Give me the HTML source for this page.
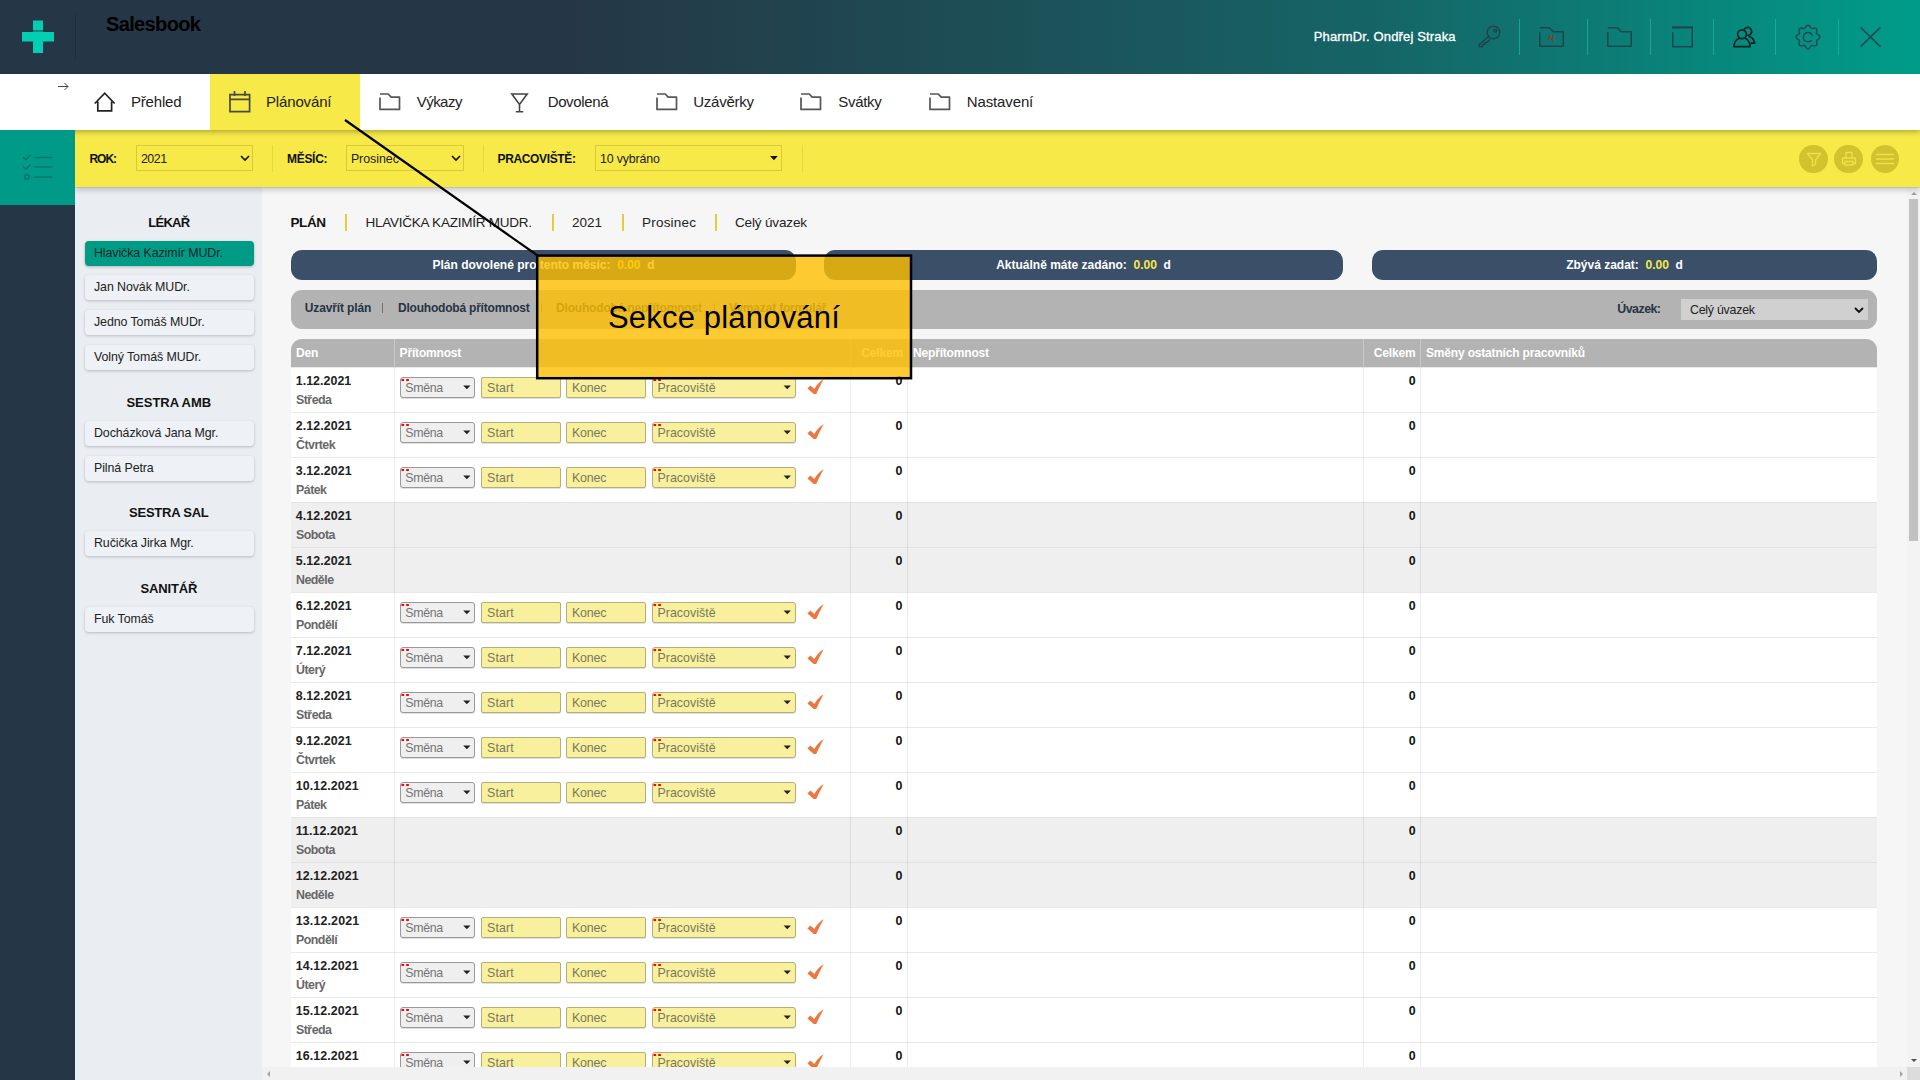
<!DOCTYPE html>
<html lang="cs"><head><meta charset="utf-8"><title>Salesbook</title>
<style>
*{box-sizing:border-box;margin:0;padding:0}
html,body{width:1920px;height:1080px;overflow:hidden;background:#f6f6f6;font-family:"Liberation Sans",sans-serif;color:#222}
body{position:relative}
.a{position:absolute}
.t{position:absolute;white-space:pre;line-height:1}
svg{position:absolute;overflow:visible}
#hdr{left:0;top:0;width:1920px;height:74px;background:linear-gradient(90deg,#253746 0%,#253746 30%,#156566 72%,#009c8a 100%)}
#nav{left:0;top:74px;width:1920px;height:56px;background:#fff;box-shadow:0 2px 5px rgba(0,0,0,.28)}
#tab{left:210px;top:0;width:150px;height:56px;background:#f7e948}
#tool{left:75px;top:130px;width:1845px;height:57px;background:#f7e948;box-shadow:0 1px 0 rgba(110,110,190,.15),0 3px 6px rgba(0,0,0,.2)}
#dark{left:0;top:205px;width:75px;height:875px;background:#253746}
#teal{left:0;top:130px;width:75px;height:75px;background:#009b88}
#side{left:75px;top:187px;width:187px;height:893px;background:#eaeef3}
.sel{position:absolute;border:1px solid #d9c93a;height:26px;top:15px}
.sep{position:absolute;width:1px;background:#e6d83f;top:15px;height:27px}
.h{font-weight:bold;font-size:13px;color:#111}
.it{position:absolute;left:10px;width:169px;height:25px;border-radius:4px;background:#eef1f5;box-shadow:0 1px 3px rgba(0,0,0,.22)}
.it.on{background:#009b84;box-shadow:0 1px 3px rgba(0,0,0,.25)}
.pill{position:absolute;top:250px;height:30px;border-radius:11px;background:#3b5068}
.bar{position:absolute;left:291px;width:1586px;background:#b3b3b3}
.row{position:absolute;left:291px;width:1586px;height:45px;background:#fff;border-top:1px solid #e9e9e9}
.row.we{background:#efefef;border-top-color:#e2e2e2}
.vl{position:absolute;top:367px;width:1px;height:700px;background:rgba(0,0,0,.075)}
.vh{position:absolute;top:339px;width:1px;height:28px;background:rgba(255,255,255,.28)}
.s1{position:absolute;left:109px;top:9px;width:75px;height:21px;border:1px solid #999;border-radius:3px;background:#efefef;box-shadow:0 1px 0 rgba(0,0,0,.12)}
.i1{position:absolute;top:9px;height:21px;border:1px solid #b5ae7c;border-radius:2px;background:#f8f09c;box-shadow:0 1px 0 rgba(0,0,0,.12)}
.rd{position:absolute;top:1px;width:2.6px;height:2px;background:#f00}
.ar{position:absolute;width:0;height:0;border-left:3.7px solid transparent;border-right:3.7px solid transparent;border-top:3.9px solid #222}
</style></head>
<body>
<div class="a" id="side">
<span class="t sh" style="left:-306.20px;width:800px;text-align:center;top:29.20px;font-size:13px;color:#111;font-weight:bold;letter-spacing:-0.772px;">LÉKAŘ</span>
<div class="it on" style="top:54px">
<span class="t si" style="left:9.00px;top:5.50px;font-size:12.4px;color:#15262d;letter-spacing:-0.086px;">Hlavička Kazimír MUDr.</span>
</div>
<div class="it" style="top:88px">
<span class="t si" style="left:9.00px;top:5.50px;font-size:12.4px;color:#222;letter-spacing:-0.086px;">Jan Novák MUDr.</span>
</div>
<div class="it" style="top:123px">
<span class="t si" style="left:9.00px;top:5.50px;font-size:12.4px;color:#222;letter-spacing:-0.086px;">Jedno Tomáš MUDr.</span>
</div>
<div class="it" style="top:158px">
<span class="t si" style="left:9.00px;top:5.50px;font-size:12.4px;color:#222;letter-spacing:-0.086px;">Volný Tomáš MUDr.</span>
</div>
<span class="t sh" style="left:-306.20px;width:800px;text-align:center;top:209.00px;font-size:13px;color:#111;font-weight:bold;letter-spacing:-0.032px;">SESTRA AMB</span>
<div class="it" style="top:234px">
<span class="t si" style="left:9.00px;top:5.50px;font-size:12.4px;color:#222;letter-spacing:-0.086px;">Docházková Jana Mgr.</span>
</div>
<div class="it" style="top:269px">
<span class="t si" style="left:9.00px;top:5.50px;font-size:12.4px;color:#222;letter-spacing:-0.086px;">Pilná Petra</span>
</div>
<span class="t sh" style="left:-306.20px;width:800px;text-align:center;top:319.20px;font-size:13px;color:#111;font-weight:bold;letter-spacing:-0.241px;">SESTRA SAL</span>
<div class="it" style="top:344px">
<span class="t si" style="left:9.00px;top:5.50px;font-size:12.4px;color:#222;letter-spacing:-0.086px;">Ručička Jirka Mgr.</span>
</div>
<span class="t sh" style="left:-306.20px;width:800px;text-align:center;top:395.00px;font-size:13px;color:#111;font-weight:bold;letter-spacing:-0.148px;">SANITÁŘ</span>
<div class="it" style="top:420px">
<span class="t si" style="left:9.00px;top:5.50px;font-size:12.4px;color:#222;letter-spacing:-0.086px;">Fuk Tomáš</span>
</div>
</div>
<div class="a" id="main" style="left:0;top:0;width:1920px;height:1080px">
<span class="t tb" style="left:290.50px;top:215.57px;font-size:13.5px;color:#111;font-weight:bold;letter-spacing:-0.421px;">PLÁN</span>
<span class="t tu" style="left:365.50px;top:215.57px;font-size:13.5px;color:#222;letter-spacing:-0.240px;">HLAVIČKA KAZIMÍR MUDR.</span>
<span class="t tt" style="left:572.00px;top:215.57px;font-size:13.5px;color:#222;letter-spacing:-0.005px;">2021</span>
<span class="t tt" style="left:642.00px;top:215.57px;font-size:13.5px;color:#222;letter-spacing:0.209px;">Prosinec</span>
<span class="t tt" style="left:735.00px;top:215.57px;font-size:13.5px;color:#222;letter-spacing:-0.154px;">Celý úvazek</span>
<div class="a" style="left:345px;top:214px;width:2px;height:17px;background:#dfcf38"></div>
<div class="a" style="left:552px;top:214px;width:2px;height:17px;background:#dfcf38"></div>
<div class="a" style="left:622px;top:214px;width:2px;height:17px;background:#dfcf38"></div>
<div class="a" style="left:715px;top:214px;width:2px;height:17px;background:#dfcf38"></div>
<div class="pill" style="left:291px;width:505px">
<span class="t p1" style="left:0;width:505px;text-align:center;top:8.84px;font-size:12px;font-weight:bold;color:#fff;letter-spacing:0.000px">Plán dovolené pro tento měsíc:  <span style="color:#f7e948">0.00</span>  d</span>
</div>
<div class="pill" style="left:824px;width:519px">
<span class="t p1" style="left:0;width:519px;text-align:center;top:8.84px;font-size:12px;font-weight:bold;color:#fff;letter-spacing:0.000px">Aktuálně máte zadáno:  <span style="color:#f7e948">0.00</span>  d</span>
</div>
<div class="pill" style="left:1372px;width:505px">
<span class="t p1" style="left:0;width:505px;text-align:center;top:8.84px;font-size:12px;font-weight:bold;color:#fff;letter-spacing:0.000px">Zbývá zadat:  <span style="color:#f7e948">0.00</span>  d</span>
</div>
<div class="bar" style="top:290px;height:39px;border-radius:11px">
<span class="t ab" style="left:13.80px;top:11.84px;font-size:12px;color:#263445;font-weight:bold;letter-spacing:-0.129px;">Uzavřít plán</span>
<span class="t ab" style="left:107.00px;top:11.84px;font-size:12px;color:#263445;font-weight:bold;letter-spacing:-0.209px;">Dlouhodobá přítomnost</span>
<span class="t ab" style="left:265.00px;top:11.84px;font-size:12px;color:#263445;font-weight:bold;letter-spacing:-0.181px;">Dlouhodobá nepřítomnost</span>
<span class="t ab" style="left:438.00px;top:11.84px;font-size:12px;color:#263445;font-weight:bold;letter-spacing:-0.181px;">Vymazat formulář</span>
<div class="a" style="left:91px;top:12.5px;width:1px;height:10px;background:#707070"></div>
<div class="a" style="left:250px;top:12.5px;width:1px;height:10px;background:#707070"></div>
<div class="a" style="left:423px;top:12.5px;width:1px;height:10px;background:#707070"></div>
<span class="t ab2" style="left:1326.30px;top:12.50px;font-size:12.4px;color:#263445;font-weight:bold;letter-spacing:-0.524px;">Úvazek:</span>
<div class="a" style="left:1390px;top:9px;width:187px;height:21px;background:#d0d0d0">
<span class="t uv" style="left:9.00px;top:5.00px;font-size:12.4px;color:#222;letter-spacing:-0.250px;">Celý úvazek</span>
<svg width="10" height="6" style="left:173px;top:8px" viewBox="0 0 10 6" fill="none" stroke="#111" stroke-width="1.8"><path d="M1 1l4 4 4-4"/></svg>
</div></div>
<div class="bar" style="top:339px;height:28px;border-radius:11px 11px 0 0">
<span class="t th" style="left:5.00px;top:7.84px;font-size:12px;color:#fff;font-weight:bold;letter-spacing:-0.176px;">Den</span>
<span class="t th" style="left:108.60px;top:7.84px;font-size:12px;color:#fff;font-weight:bold;letter-spacing:-0.176px;">Přítomnost</span>
<span class="t th" style="right:974.00px;top:7.84px;font-size:12px;color:#fff;font-weight:bold;letter-spacing:-0.176px;">Celkem</span>
<span class="t th" style="left:622.00px;top:7.84px;font-size:12px;color:#fff;font-weight:bold;letter-spacing:-0.176px;">Nepřítomnost</span>
<span class="t th" style="right:461.50px;top:7.84px;font-size:12px;color:#fff;font-weight:bold;letter-spacing:-0.176px;">Celkem</span>
<span class="t th" style="left:1135.00px;top:7.84px;font-size:12px;color:#fff;font-weight:bold;letter-spacing:-0.176px;">Směny ostatních pracovníků</span>
</div>
<div class="row" style="top:367px">
<span class="t dt" style="left:4.80px;top:6.50px;font-size:12.4px;color:#222;font-weight:bold;letter-spacing:0.034px;">1.12.2021</span>
<span class="t dd" style="left:5.00px;top:25.50px;font-size:12.4px;color:#686868;font-weight:bold;letter-spacing:-0.513px;">Středa</span>
<span class="t zz" style="right:974.60px;top:6.50px;font-size:12.4px;color:#111;font-weight:bold;">0</span>
<span class="t zz" style="right:461.40px;top:6.50px;font-size:12.4px;color:#111;font-weight:bold;">0</span>
<div class="s1"><svg width="73" height="19" style="left:0;top:0"><path d="M.5 1.1h2.6V3H.5zM5.2 1.1h2.7V3H5.2z" fill="#f00"/><path d="M62.2 7.4h7.3l-3.65 3.9z" fill="#222"/></svg>
<span class="t fc" style="left:4.20px;top:3.50px;font-size:12.4px;color:#757575;letter-spacing:-0.315px;">Směna</span>
</div>
<div class="i1" style="left:190px;width:80px">
<span class="t fc" style="left:5.00px;top:3.50px;font-size:12.4px;color:#7a7960;letter-spacing:0.130px;">Start</span>
</div>
<div class="i1" style="left:275px;width:80px">
<span class="t fc" style="left:5.00px;top:3.50px;font-size:12.4px;color:#7a7960;letter-spacing:-0.185px;">Konec</span>
</div>
<div class="i1" style="left:361px;width:144px;border-radius:3px"><svg width="142" height="19" style="left:0;top:0"><path d="M.5 1.1h2.6V3H.5zM5.2 1.1h2.7V3H5.2z" fill="#f00"/><path d="M130.6 7.4h7.3l-3.65 3.9z" fill="#222"/></svg>
<span class="t fc" style="left:4.50px;top:3.50px;font-size:12.4px;color:#7a7960;letter-spacing:0.027px;">Pracoviště</span>
</div>
<svg width="17" height="16" style="left:515.6px;top:11px" viewBox="0 0 16 15"><path d="M.4 8.9 3.1 6.2 6.9 9.4C9 5.6 12 2.2 15.8.2 13.3 4.2 11 8.8 8.7 14.2H6.3z" fill="#ea7941"/></svg>
</div>
<div class="row" style="top:412px">
<span class="t dt" style="left:4.80px;top:6.50px;font-size:12.4px;color:#222;font-weight:bold;letter-spacing:0.091px;">2.12.2021</span>
<span class="t dd" style="left:5.00px;top:25.50px;font-size:12.4px;color:#686868;font-weight:bold;letter-spacing:-0.513px;">Čtvrtek</span>
<span class="t zz" style="right:974.60px;top:6.50px;font-size:12.4px;color:#111;font-weight:bold;">0</span>
<span class="t zz" style="right:461.40px;top:6.50px;font-size:12.4px;color:#111;font-weight:bold;">0</span>
<div class="s1"><svg width="73" height="19" style="left:0;top:0"><path d="M.5 1.1h2.6V3H.5zM5.2 1.1h2.7V3H5.2z" fill="#f00"/><path d="M62.2 7.4h7.3l-3.65 3.9z" fill="#222"/></svg>
<span class="t fc" style="left:4.20px;top:3.50px;font-size:12.4px;color:#757575;letter-spacing:-0.315px;">Směna</span>
</div>
<div class="i1" style="left:190px;width:80px">
<span class="t fc" style="left:5.00px;top:3.50px;font-size:12.4px;color:#7a7960;letter-spacing:0.130px;">Start</span>
</div>
<div class="i1" style="left:275px;width:80px">
<span class="t fc" style="left:5.00px;top:3.50px;font-size:12.4px;color:#7a7960;letter-spacing:-0.185px;">Konec</span>
</div>
<div class="i1" style="left:361px;width:144px;border-radius:3px"><svg width="142" height="19" style="left:0;top:0"><path d="M.5 1.1h2.6V3H.5zM5.2 1.1h2.7V3H5.2z" fill="#f00"/><path d="M130.6 7.4h7.3l-3.65 3.9z" fill="#222"/></svg>
<span class="t fc" style="left:4.50px;top:3.50px;font-size:12.4px;color:#7a7960;letter-spacing:0.027px;">Pracoviště</span>
</div>
<svg width="17" height="16" style="left:515.6px;top:11px" viewBox="0 0 16 15"><path d="M.4 8.9 3.1 6.2 6.9 9.4C9 5.6 12 2.2 15.8.2 13.3 4.2 11 8.8 8.7 14.2H6.3z" fill="#ea7941"/></svg>
</div>
<div class="row" style="top:457px">
<span class="t dt" style="left:4.80px;top:6.50px;font-size:12.4px;color:#222;font-weight:bold;letter-spacing:0.091px;">3.12.2021</span>
<span class="t dd" style="left:5.00px;top:25.50px;font-size:12.4px;color:#686868;font-weight:bold;letter-spacing:-0.513px;">Pátek</span>
<span class="t zz" style="right:974.60px;top:6.50px;font-size:12.4px;color:#111;font-weight:bold;">0</span>
<span class="t zz" style="right:461.40px;top:6.50px;font-size:12.4px;color:#111;font-weight:bold;">0</span>
<div class="s1"><svg width="73" height="19" style="left:0;top:0"><path d="M.5 1.1h2.6V3H.5zM5.2 1.1h2.7V3H5.2z" fill="#f00"/><path d="M62.2 7.4h7.3l-3.65 3.9z" fill="#222"/></svg>
<span class="t fc" style="left:4.20px;top:3.50px;font-size:12.4px;color:#757575;letter-spacing:-0.315px;">Směna</span>
</div>
<div class="i1" style="left:190px;width:80px">
<span class="t fc" style="left:5.00px;top:3.50px;font-size:12.4px;color:#7a7960;letter-spacing:0.130px;">Start</span>
</div>
<div class="i1" style="left:275px;width:80px">
<span class="t fc" style="left:5.00px;top:3.50px;font-size:12.4px;color:#7a7960;letter-spacing:-0.185px;">Konec</span>
</div>
<div class="i1" style="left:361px;width:144px;border-radius:3px"><svg width="142" height="19" style="left:0;top:0"><path d="M.5 1.1h2.6V3H.5zM5.2 1.1h2.7V3H5.2z" fill="#f00"/><path d="M130.6 7.4h7.3l-3.65 3.9z" fill="#222"/></svg>
<span class="t fc" style="left:4.50px;top:3.50px;font-size:12.4px;color:#7a7960;letter-spacing:0.027px;">Pracoviště</span>
</div>
<svg width="17" height="16" style="left:515.6px;top:11px" viewBox="0 0 16 15"><path d="M.4 8.9 3.1 6.2 6.9 9.4C9 5.6 12 2.2 15.8.2 13.3 4.2 11 8.8 8.7 14.2H6.3z" fill="#ea7941"/></svg>
</div>
<div class="row we" style="top:502px">
<span class="t dt" style="left:4.80px;top:6.50px;font-size:12.4px;color:#222;font-weight:bold;letter-spacing:0.091px;">4.12.2021</span>
<span class="t dd" style="left:5.00px;top:25.50px;font-size:12.4px;color:#686868;font-weight:bold;letter-spacing:-0.513px;">Sobota</span>
<span class="t zz" style="right:974.60px;top:6.50px;font-size:12.4px;color:#111;font-weight:bold;">0</span>
<span class="t zz" style="right:461.40px;top:6.50px;font-size:12.4px;color:#111;font-weight:bold;">0</span>
</div>
<div class="row we" style="top:547px">
<span class="t dt" style="left:4.80px;top:6.50px;font-size:12.4px;color:#222;font-weight:bold;letter-spacing:0.091px;">5.12.2021</span>
<span class="t dd" style="left:5.00px;top:25.50px;font-size:12.4px;color:#686868;font-weight:bold;letter-spacing:-0.513px;">Neděle</span>
<span class="t zz" style="right:974.60px;top:6.50px;font-size:12.4px;color:#111;font-weight:bold;">0</span>
<span class="t zz" style="right:461.40px;top:6.50px;font-size:12.4px;color:#111;font-weight:bold;">0</span>
</div>
<div class="row" style="top:592px">
<span class="t dt" style="left:4.80px;top:6.50px;font-size:12.4px;color:#222;font-weight:bold;letter-spacing:0.091px;">6.12.2021</span>
<span class="t dd" style="left:5.00px;top:25.50px;font-size:12.4px;color:#686868;font-weight:bold;letter-spacing:-0.513px;">Pondělí</span>
<span class="t zz" style="right:974.60px;top:6.50px;font-size:12.4px;color:#111;font-weight:bold;">0</span>
<span class="t zz" style="right:461.40px;top:6.50px;font-size:12.4px;color:#111;font-weight:bold;">0</span>
<div class="s1"><svg width="73" height="19" style="left:0;top:0"><path d="M.5 1.1h2.6V3H.5zM5.2 1.1h2.7V3H5.2z" fill="#f00"/><path d="M62.2 7.4h7.3l-3.65 3.9z" fill="#222"/></svg>
<span class="t fc" style="left:4.20px;top:3.50px;font-size:12.4px;color:#757575;letter-spacing:-0.315px;">Směna</span>
</div>
<div class="i1" style="left:190px;width:80px">
<span class="t fc" style="left:5.00px;top:3.50px;font-size:12.4px;color:#7a7960;letter-spacing:0.130px;">Start</span>
</div>
<div class="i1" style="left:275px;width:80px">
<span class="t fc" style="left:5.00px;top:3.50px;font-size:12.4px;color:#7a7960;letter-spacing:-0.185px;">Konec</span>
</div>
<div class="i1" style="left:361px;width:144px;border-radius:3px"><svg width="142" height="19" style="left:0;top:0"><path d="M.5 1.1h2.6V3H.5zM5.2 1.1h2.7V3H5.2z" fill="#f00"/><path d="M130.6 7.4h7.3l-3.65 3.9z" fill="#222"/></svg>
<span class="t fc" style="left:4.50px;top:3.50px;font-size:12.4px;color:#7a7960;letter-spacing:0.027px;">Pracoviště</span>
</div>
<svg width="17" height="16" style="left:515.6px;top:11px" viewBox="0 0 16 15"><path d="M.4 8.9 3.1 6.2 6.9 9.4C9 5.6 12 2.2 15.8.2 13.3 4.2 11 8.8 8.7 14.2H6.3z" fill="#ea7941"/></svg>
</div>
<div class="row" style="top:637px">
<span class="t dt" style="left:4.80px;top:6.50px;font-size:12.4px;color:#222;font-weight:bold;letter-spacing:0.091px;">7.12.2021</span>
<span class="t dd" style="left:5.00px;top:25.50px;font-size:12.4px;color:#686868;font-weight:bold;letter-spacing:-0.513px;">Úterý</span>
<span class="t zz" style="right:974.60px;top:6.50px;font-size:12.4px;color:#111;font-weight:bold;">0</span>
<span class="t zz" style="right:461.40px;top:6.50px;font-size:12.4px;color:#111;font-weight:bold;">0</span>
<div class="s1"><svg width="73" height="19" style="left:0;top:0"><path d="M.5 1.1h2.6V3H.5zM5.2 1.1h2.7V3H5.2z" fill="#f00"/><path d="M62.2 7.4h7.3l-3.65 3.9z" fill="#222"/></svg>
<span class="t fc" style="left:4.20px;top:3.50px;font-size:12.4px;color:#757575;letter-spacing:-0.315px;">Směna</span>
</div>
<div class="i1" style="left:190px;width:80px">
<span class="t fc" style="left:5.00px;top:3.50px;font-size:12.4px;color:#7a7960;letter-spacing:0.130px;">Start</span>
</div>
<div class="i1" style="left:275px;width:80px">
<span class="t fc" style="left:5.00px;top:3.50px;font-size:12.4px;color:#7a7960;letter-spacing:-0.185px;">Konec</span>
</div>
<div class="i1" style="left:361px;width:144px;border-radius:3px"><svg width="142" height="19" style="left:0;top:0"><path d="M.5 1.1h2.6V3H.5zM5.2 1.1h2.7V3H5.2z" fill="#f00"/><path d="M130.6 7.4h7.3l-3.65 3.9z" fill="#222"/></svg>
<span class="t fc" style="left:4.50px;top:3.50px;font-size:12.4px;color:#7a7960;letter-spacing:0.027px;">Pracoviště</span>
</div>
<svg width="17" height="16" style="left:515.6px;top:11px" viewBox="0 0 16 15"><path d="M.4 8.9 3.1 6.2 6.9 9.4C9 5.6 12 2.2 15.8.2 13.3 4.2 11 8.8 8.7 14.2H6.3z" fill="#ea7941"/></svg>
</div>
<div class="row" style="top:682px">
<span class="t dt" style="left:4.80px;top:6.50px;font-size:12.4px;color:#222;font-weight:bold;letter-spacing:0.091px;">8.12.2021</span>
<span class="t dd" style="left:5.00px;top:25.50px;font-size:12.4px;color:#686868;font-weight:bold;letter-spacing:-0.513px;">Středa</span>
<span class="t zz" style="right:974.60px;top:6.50px;font-size:12.4px;color:#111;font-weight:bold;">0</span>
<span class="t zz" style="right:461.40px;top:6.50px;font-size:12.4px;color:#111;font-weight:bold;">0</span>
<div class="s1"><svg width="73" height="19" style="left:0;top:0"><path d="M.5 1.1h2.6V3H.5zM5.2 1.1h2.7V3H5.2z" fill="#f00"/><path d="M62.2 7.4h7.3l-3.65 3.9z" fill="#222"/></svg>
<span class="t fc" style="left:4.20px;top:3.50px;font-size:12.4px;color:#757575;letter-spacing:-0.315px;">Směna</span>
</div>
<div class="i1" style="left:190px;width:80px">
<span class="t fc" style="left:5.00px;top:3.50px;font-size:12.4px;color:#7a7960;letter-spacing:0.130px;">Start</span>
</div>
<div class="i1" style="left:275px;width:80px">
<span class="t fc" style="left:5.00px;top:3.50px;font-size:12.4px;color:#7a7960;letter-spacing:-0.185px;">Konec</span>
</div>
<div class="i1" style="left:361px;width:144px;border-radius:3px"><svg width="142" height="19" style="left:0;top:0"><path d="M.5 1.1h2.6V3H.5zM5.2 1.1h2.7V3H5.2z" fill="#f00"/><path d="M130.6 7.4h7.3l-3.65 3.9z" fill="#222"/></svg>
<span class="t fc" style="left:4.50px;top:3.50px;font-size:12.4px;color:#7a7960;letter-spacing:0.027px;">Pracoviště</span>
</div>
<svg width="17" height="16" style="left:515.6px;top:11px" viewBox="0 0 16 15"><path d="M.4 8.9 3.1 6.2 6.9 9.4C9 5.6 12 2.2 15.8.2 13.3 4.2 11 8.8 8.7 14.2H6.3z" fill="#ea7941"/></svg>
</div>
<div class="row" style="top:727px">
<span class="t dt" style="left:4.80px;top:6.50px;font-size:12.4px;color:#222;font-weight:bold;letter-spacing:0.091px;">9.12.2021</span>
<span class="t dd" style="left:5.00px;top:25.50px;font-size:12.4px;color:#686868;font-weight:bold;letter-spacing:-0.513px;">Čtvrtek</span>
<span class="t zz" style="right:974.60px;top:6.50px;font-size:12.4px;color:#111;font-weight:bold;">0</span>
<span class="t zz" style="right:461.40px;top:6.50px;font-size:12.4px;color:#111;font-weight:bold;">0</span>
<div class="s1"><svg width="73" height="19" style="left:0;top:0"><path d="M.5 1.1h2.6V3H.5zM5.2 1.1h2.7V3H5.2z" fill="#f00"/><path d="M62.2 7.4h7.3l-3.65 3.9z" fill="#222"/></svg>
<span class="t fc" style="left:4.20px;top:3.50px;font-size:12.4px;color:#757575;letter-spacing:-0.315px;">Směna</span>
</div>
<div class="i1" style="left:190px;width:80px">
<span class="t fc" style="left:5.00px;top:3.50px;font-size:12.4px;color:#7a7960;letter-spacing:0.130px;">Start</span>
</div>
<div class="i1" style="left:275px;width:80px">
<span class="t fc" style="left:5.00px;top:3.50px;font-size:12.4px;color:#7a7960;letter-spacing:-0.185px;">Konec</span>
</div>
<div class="i1" style="left:361px;width:144px;border-radius:3px"><svg width="142" height="19" style="left:0;top:0"><path d="M.5 1.1h2.6V3H.5zM5.2 1.1h2.7V3H5.2z" fill="#f00"/><path d="M130.6 7.4h7.3l-3.65 3.9z" fill="#222"/></svg>
<span class="t fc" style="left:4.50px;top:3.50px;font-size:12.4px;color:#7a7960;letter-spacing:0.027px;">Pracoviště</span>
</div>
<svg width="17" height="16" style="left:515.6px;top:11px" viewBox="0 0 16 15"><path d="M.4 8.9 3.1 6.2 6.9 9.4C9 5.6 12 2.2 15.8.2 13.3 4.2 11 8.8 8.7 14.2H6.3z" fill="#ea7941"/></svg>
</div>
<div class="row" style="top:772px">
<span class="t dt" style="left:4.80px;top:6.50px;font-size:12.4px;color:#222;font-weight:bold;letter-spacing:0.091px;">10.12.2021</span>
<span class="t dd" style="left:5.00px;top:25.50px;font-size:12.4px;color:#686868;font-weight:bold;letter-spacing:-0.513px;">Pátek</span>
<span class="t zz" style="right:974.60px;top:6.50px;font-size:12.4px;color:#111;font-weight:bold;">0</span>
<span class="t zz" style="right:461.40px;top:6.50px;font-size:12.4px;color:#111;font-weight:bold;">0</span>
<div class="s1"><svg width="73" height="19" style="left:0;top:0"><path d="M.5 1.1h2.6V3H.5zM5.2 1.1h2.7V3H5.2z" fill="#f00"/><path d="M62.2 7.4h7.3l-3.65 3.9z" fill="#222"/></svg>
<span class="t fc" style="left:4.20px;top:3.50px;font-size:12.4px;color:#757575;letter-spacing:-0.315px;">Směna</span>
</div>
<div class="i1" style="left:190px;width:80px">
<span class="t fc" style="left:5.00px;top:3.50px;font-size:12.4px;color:#7a7960;letter-spacing:0.130px;">Start</span>
</div>
<div class="i1" style="left:275px;width:80px">
<span class="t fc" style="left:5.00px;top:3.50px;font-size:12.4px;color:#7a7960;letter-spacing:-0.185px;">Konec</span>
</div>
<div class="i1" style="left:361px;width:144px;border-radius:3px"><svg width="142" height="19" style="left:0;top:0"><path d="M.5 1.1h2.6V3H.5zM5.2 1.1h2.7V3H5.2z" fill="#f00"/><path d="M130.6 7.4h7.3l-3.65 3.9z" fill="#222"/></svg>
<span class="t fc" style="left:4.50px;top:3.50px;font-size:12.4px;color:#7a7960;letter-spacing:0.027px;">Pracoviště</span>
</div>
<svg width="17" height="16" style="left:515.6px;top:11px" viewBox="0 0 16 15"><path d="M.4 8.9 3.1 6.2 6.9 9.4C9 5.6 12 2.2 15.8.2 13.3 4.2 11 8.8 8.7 14.2H6.3z" fill="#ea7941"/></svg>
</div>
<div class="row we" style="top:817px">
<span class="t dt" style="left:4.80px;top:6.50px;font-size:12.4px;color:#222;font-weight:bold;letter-spacing:0.091px;">11.12.2021</span>
<span class="t dd" style="left:5.00px;top:25.50px;font-size:12.4px;color:#686868;font-weight:bold;letter-spacing:-0.513px;">Sobota</span>
<span class="t zz" style="right:974.60px;top:6.50px;font-size:12.4px;color:#111;font-weight:bold;">0</span>
<span class="t zz" style="right:461.40px;top:6.50px;font-size:12.4px;color:#111;font-weight:bold;">0</span>
</div>
<div class="row we" style="top:862px">
<span class="t dt" style="left:4.80px;top:6.50px;font-size:12.4px;color:#222;font-weight:bold;letter-spacing:0.091px;">12.12.2021</span>
<span class="t dd" style="left:5.00px;top:25.50px;font-size:12.4px;color:#686868;font-weight:bold;letter-spacing:-0.513px;">Neděle</span>
<span class="t zz" style="right:974.60px;top:6.50px;font-size:12.4px;color:#111;font-weight:bold;">0</span>
<span class="t zz" style="right:461.40px;top:6.50px;font-size:12.4px;color:#111;font-weight:bold;">0</span>
</div>
<div class="row" style="top:907px">
<span class="t dt" style="left:4.80px;top:6.50px;font-size:12.4px;color:#222;font-weight:bold;letter-spacing:0.142px;">13.12.2021</span>
<span class="t dd" style="left:5.00px;top:25.50px;font-size:12.4px;color:#686868;font-weight:bold;letter-spacing:-0.513px;">Pondělí</span>
<span class="t zz" style="right:974.60px;top:6.50px;font-size:12.4px;color:#111;font-weight:bold;">0</span>
<span class="t zz" style="right:461.40px;top:6.50px;font-size:12.4px;color:#111;font-weight:bold;">0</span>
<div class="s1"><svg width="73" height="19" style="left:0;top:0"><path d="M.5 1.1h2.6V3H.5zM5.2 1.1h2.7V3H5.2z" fill="#f00"/><path d="M62.2 7.4h7.3l-3.65 3.9z" fill="#222"/></svg>
<span class="t fc" style="left:4.20px;top:3.50px;font-size:12.4px;color:#757575;letter-spacing:-0.315px;">Směna</span>
</div>
<div class="i1" style="left:190px;width:80px">
<span class="t fc" style="left:5.00px;top:3.50px;font-size:12.4px;color:#7a7960;letter-spacing:0.130px;">Start</span>
</div>
<div class="i1" style="left:275px;width:80px">
<span class="t fc" style="left:5.00px;top:3.50px;font-size:12.4px;color:#7a7960;letter-spacing:-0.185px;">Konec</span>
</div>
<div class="i1" style="left:361px;width:144px;border-radius:3px"><svg width="142" height="19" style="left:0;top:0"><path d="M.5 1.1h2.6V3H.5zM5.2 1.1h2.7V3H5.2z" fill="#f00"/><path d="M130.6 7.4h7.3l-3.65 3.9z" fill="#222"/></svg>
<span class="t fc" style="left:4.50px;top:3.50px;font-size:12.4px;color:#7a7960;letter-spacing:0.027px;">Pracoviště</span>
</div>
<svg width="17" height="16" style="left:515.6px;top:11px" viewBox="0 0 16 15"><path d="M.4 8.9 3.1 6.2 6.9 9.4C9 5.6 12 2.2 15.8.2 13.3 4.2 11 8.8 8.7 14.2H6.3z" fill="#ea7941"/></svg>
</div>
<div class="row" style="top:952px">
<span class="t dt" style="left:4.80px;top:6.50px;font-size:12.4px;color:#222;font-weight:bold;letter-spacing:0.091px;">14.12.2021</span>
<span class="t dd" style="left:5.00px;top:25.50px;font-size:12.4px;color:#686868;font-weight:bold;letter-spacing:-0.513px;">Úterý</span>
<span class="t zz" style="right:974.60px;top:6.50px;font-size:12.4px;color:#111;font-weight:bold;">0</span>
<span class="t zz" style="right:461.40px;top:6.50px;font-size:12.4px;color:#111;font-weight:bold;">0</span>
<div class="s1"><svg width="73" height="19" style="left:0;top:0"><path d="M.5 1.1h2.6V3H.5zM5.2 1.1h2.7V3H5.2z" fill="#f00"/><path d="M62.2 7.4h7.3l-3.65 3.9z" fill="#222"/></svg>
<span class="t fc" style="left:4.20px;top:3.50px;font-size:12.4px;color:#757575;letter-spacing:-0.315px;">Směna</span>
</div>
<div class="i1" style="left:190px;width:80px">
<span class="t fc" style="left:5.00px;top:3.50px;font-size:12.4px;color:#7a7960;letter-spacing:0.130px;">Start</span>
</div>
<div class="i1" style="left:275px;width:80px">
<span class="t fc" style="left:5.00px;top:3.50px;font-size:12.4px;color:#7a7960;letter-spacing:-0.185px;">Konec</span>
</div>
<div class="i1" style="left:361px;width:144px;border-radius:3px"><svg width="142" height="19" style="left:0;top:0"><path d="M.5 1.1h2.6V3H.5zM5.2 1.1h2.7V3H5.2z" fill="#f00"/><path d="M130.6 7.4h7.3l-3.65 3.9z" fill="#222"/></svg>
<span class="t fc" style="left:4.50px;top:3.50px;font-size:12.4px;color:#7a7960;letter-spacing:0.027px;">Pracoviště</span>
</div>
<svg width="17" height="16" style="left:515.6px;top:11px" viewBox="0 0 16 15"><path d="M.4 8.9 3.1 6.2 6.9 9.4C9 5.6 12 2.2 15.8.2 13.3 4.2 11 8.8 8.7 14.2H6.3z" fill="#ea7941"/></svg>
</div>
<div class="row" style="top:997px">
<span class="t dt" style="left:4.80px;top:6.50px;font-size:12.4px;color:#222;font-weight:bold;letter-spacing:0.091px;">15.12.2021</span>
<span class="t dd" style="left:5.00px;top:25.50px;font-size:12.4px;color:#686868;font-weight:bold;letter-spacing:-0.513px;">Středa</span>
<span class="t zz" style="right:974.60px;top:6.50px;font-size:12.4px;color:#111;font-weight:bold;">0</span>
<span class="t zz" style="right:461.40px;top:6.50px;font-size:12.4px;color:#111;font-weight:bold;">0</span>
<div class="s1"><svg width="73" height="19" style="left:0;top:0"><path d="M.5 1.1h2.6V3H.5zM5.2 1.1h2.7V3H5.2z" fill="#f00"/><path d="M62.2 7.4h7.3l-3.65 3.9z" fill="#222"/></svg>
<span class="t fc" style="left:4.20px;top:3.50px;font-size:12.4px;color:#757575;letter-spacing:-0.315px;">Směna</span>
</div>
<div class="i1" style="left:190px;width:80px">
<span class="t fc" style="left:5.00px;top:3.50px;font-size:12.4px;color:#7a7960;letter-spacing:0.130px;">Start</span>
</div>
<div class="i1" style="left:275px;width:80px">
<span class="t fc" style="left:5.00px;top:3.50px;font-size:12.4px;color:#7a7960;letter-spacing:-0.185px;">Konec</span>
</div>
<div class="i1" style="left:361px;width:144px;border-radius:3px"><svg width="142" height="19" style="left:0;top:0"><path d="M.5 1.1h2.6V3H.5zM5.2 1.1h2.7V3H5.2z" fill="#f00"/><path d="M130.6 7.4h7.3l-3.65 3.9z" fill="#222"/></svg>
<span class="t fc" style="left:4.50px;top:3.50px;font-size:12.4px;color:#7a7960;letter-spacing:0.027px;">Pracoviště</span>
</div>
<svg width="17" height="16" style="left:515.6px;top:11px" viewBox="0 0 16 15"><path d="M.4 8.9 3.1 6.2 6.9 9.4C9 5.6 12 2.2 15.8.2 13.3 4.2 11 8.8 8.7 14.2H6.3z" fill="#ea7941"/></svg>
</div>
<div class="row" style="top:1042px">
<span class="t dt" style="left:4.80px;top:6.50px;font-size:12.4px;color:#222;font-weight:bold;letter-spacing:0.091px;">16.12.2021</span>
<span class="t dd" style="left:5.00px;top:25.50px;font-size:12.4px;color:#686868;font-weight:bold;letter-spacing:-0.513px;">Čtvrtek</span>
<span class="t zz" style="right:974.60px;top:6.50px;font-size:12.4px;color:#111;font-weight:bold;">0</span>
<span class="t zz" style="right:461.40px;top:6.50px;font-size:12.4px;color:#111;font-weight:bold;">0</span>
<div class="s1"><svg width="73" height="19" style="left:0;top:0"><path d="M.5 1.1h2.6V3H.5zM5.2 1.1h2.7V3H5.2z" fill="#f00"/><path d="M62.2 7.4h7.3l-3.65 3.9z" fill="#222"/></svg>
<span class="t fc" style="left:4.20px;top:3.50px;font-size:12.4px;color:#757575;letter-spacing:-0.315px;">Směna</span>
</div>
<div class="i1" style="left:190px;width:80px">
<span class="t fc" style="left:5.00px;top:3.50px;font-size:12.4px;color:#7a7960;letter-spacing:0.130px;">Start</span>
</div>
<div class="i1" style="left:275px;width:80px">
<span class="t fc" style="left:5.00px;top:3.50px;font-size:12.4px;color:#7a7960;letter-spacing:-0.185px;">Konec</span>
</div>
<div class="i1" style="left:361px;width:144px;border-radius:3px"><svg width="142" height="19" style="left:0;top:0"><path d="M.5 1.1h2.6V3H.5zM5.2 1.1h2.7V3H5.2z" fill="#f00"/><path d="M130.6 7.4h7.3l-3.65 3.9z" fill="#222"/></svg>
<span class="t fc" style="left:4.50px;top:3.50px;font-size:12.4px;color:#7a7960;letter-spacing:0.027px;">Pracoviště</span>
</div>
<svg width="17" height="16" style="left:515.6px;top:11px" viewBox="0 0 16 15"><path d="M.4 8.9 3.1 6.2 6.9 9.4C9 5.6 12 2.2 15.8.2 13.3 4.2 11 8.8 8.7 14.2H6.3z" fill="#ea7941"/></svg>
</div>
<div class="vl" style="left:394px"></div><div class="vh" style="left:394px"></div>
<div class="vl" style="left:850px"></div><div class="vh" style="left:850px"></div>
<div class="vl" style="left:907px"></div><div class="vh" style="left:907px"></div>
<div class="vl" style="left:1363px"></div><div class="vh" style="left:1363px"></div>
<div class="vl" style="left:1420px"></div><div class="vh" style="left:1420px"></div>
</div>
<div class="a" style="left:1907px;top:187px;width:13px;height:880px;background:#f3f3f3"><div class="a" style="left:2px;top:12px;width:9px;height:342px;background:#c1c1c1"></div><i class="ar" style="left:3.5px;top:5px;border-top:none;border-bottom:3.5px solid #a3a3a3;border-left-width:3px;border-right-width:3px"></i><i class="ar" style="left:3.5px;top:872px;border-top:3.5px solid #505050;border-left-width:3px;border-right-width:3px"></i></div>
<div class="a" style="left:262px;top:1067px;width:1645px;height:13px;background:#f1f1f1"><i class="ar" style="left:4.5px;top:3.5px;border-top:3px solid transparent;border-bottom:3px solid transparent;border-left:none;border-right:3.5px solid #a3a3a3"></i><i class="ar" style="left:1637.5px;top:3.5px;border-top:3px solid transparent;border-bottom:3px solid transparent;border-right:none;border-left:3.5px solid #a3a3a3"></i></div>
<div class="a" style="left:1907px;top:1067px;width:13px;height:13px;background:#dcdcdc"></div>
<div class="a" id="tool">
<span class="t tl" style="left:14.50px;top:23.24px;font-size:12px;color:#111;font-weight:bold;letter-spacing:-1.056px;">ROK:</span>
<span class="t tl" style="left:212.00px;top:23.24px;font-size:12px;color:#111;font-weight:bold;letter-spacing:-0.303px;">MĚSÍC:</span>
<span class="t tl" style="left:422.50px;top:23.24px;font-size:12px;color:#111;font-weight:bold;letter-spacing:-0.351px;">PRACOVIŠTĚ:</span>
<div class="sel" style="left:61px;width:117px">
<span class="t ts" style="left:3.90px;top:6.50px;font-size:12.4px;color:#222;letter-spacing:-0.442px;">2021</span>
<svg width="10" height="6" style="left:103px;top:9px" viewBox="0 0 10 6" fill="none" stroke="#111" stroke-width="1.6"><path d="M1 1l4 4 4-4"/></svg>
</div>
<div class="sel" style="left:271px;width:118px">
<span class="t ts" style="left:3.90px;top:6.50px;font-size:12.4px;color:#222;letter-spacing:-0.031px;">Prosinec</span>
<svg width="10" height="6" style="left:104px;top:9px" viewBox="0 0 10 6" fill="none" stroke="#111" stroke-width="1.6"><path d="M1 1l4 4 4-4"/></svg>
</div>
<div class="sel" style="left:520px;width:187px">
<span class="t ts" style="left:3.90px;top:6.50px;font-size:12.4px;color:#222;letter-spacing:-0.147px;">10 vybráno</span>
<svg width="8" height="5" style="left:173.8px;top:9.6px" viewBox="0 0 8 5"><path d="M0 0h7.8L3.9 4.3z" fill="#111"/></svg>
</div>
<div class="sep" style="left:197px"></div>
<div class="sep" style="left:408px"></div>
<div class="sep" style="left:727px"></div>
<div class="a" style="left:1724.3px;top:14.6px;width:28.6px;height:28.6px;border-radius:50%;background:#d2c32e"></div>
<svg width="16" height="16" style="left:1730.6px;top:21.9px" viewBox="0 0 16 16" fill="none" stroke="#efe04c" stroke-width="1.3" stroke-linejoin="round"><path d="M1.5 1.5h13L9.5 8v4.5L6.5 14V8z"/></svg>
<div class="a" style="left:1759.2px;top:14.6px;width:28.6px;height:28.6px;border-radius:50%;background:#d2c32e"></div>
<svg width="16" height="16" style="left:1765.5px;top:20.9px" viewBox="0 0 16 16" fill="none" stroke="#efe04c" stroke-width="1.3" stroke-linejoin="round"><path d="M5 7V1.5h6V7M4 12.5H1.5V7h13v5.5H12M4 10.5h8v3.5H4z"/></svg>
<div class="a" style="left:1795.7px;top:14.6px;width:28.6px;height:28.6px;border-radius:50%;background:#d2c32e"></div>
<svg width="18" height="12" style="left:1801.0px;top:23.4px" viewBox="0 0 18 12" fill="none" stroke="#efe04c" stroke-width="1.6"><path d="M0 1.5h18M0 6h18M0 10.5h18"/></svg>
</div>
<div class="a" id="nav"><div class="a" id="tab"></div>
<svg width="12" height="9" style="left:57px;top:7.5px" viewBox="0 0 12 9" fill="none" stroke="#444" stroke-width="1"><path d="M1 4.5h10M7.5 1l3.5 3.5L7.5 8"/></svg>
<svg width="22" height="20" style="left:93.75px;top:18px" viewBox="0 0 22 20" fill="none" stroke="#222" stroke-width="1.7" stroke-linejoin="miter"><path d="M.8 11.5 10.7 1.2l9.9 10.3M3.8 9.5v9.4h13.8V9.5"/></svg>
<span class="t nv" style="left:131.00px;top:19.90px;font-size:15px;color:#222;letter-spacing:-0.201px;">Přehled</span>
<svg width="22" height="22" style="left:228.75px;top:17px" viewBox="0 0 22 22" fill="none" stroke="#4a4a3a" stroke-width="1.7"><path d="M1 3.6h19.6v17H1zM1 8.4h19.6M5.5 0v5M16 0v5"/></svg>
<span class="t nv" style="left:266.00px;top:19.90px;font-size:15px;color:#222;letter-spacing:-0.153px;">Plánování</span>
<svg width="22" height="18" style="left:379px;top:19px" viewBox="0 0 22 18" fill="none" stroke="#555" stroke-width="1.7" stroke-linejoin="round"><path d="M1 4.6v11.8h19.5V4.2h-8.3L9.2 1H1"/></svg>
<span class="t nv" style="left:416.70px;top:19.90px;font-size:15px;color:#222;letter-spacing:-0.530px;">Výkazy</span>
<svg width="18" height="20" style="left:510.5px;top:18.5px" viewBox="0 0 18 20" fill="none" stroke="#444" stroke-width="1.6"><path d="M.8 1h15.4L8.5 11.5zM8.5 11.5v7.3M4.8 18.8h7.4"/></svg>
<span class="t nv" style="left:547.70px;top:19.90px;font-size:15px;color:#222;letter-spacing:-0.369px;">Dovolená</span>
<svg width="22" height="18" style="left:656.3px;top:19px" viewBox="0 0 22 18" fill="none" stroke="#555" stroke-width="1.7" stroke-linejoin="round"><path d="M1 4.6v11.8h19.5V4.2h-8.3L9.2 1H1"/></svg>
<span class="t nv" style="left:693.30px;top:19.90px;font-size:15px;color:#222;letter-spacing:-0.261px;">Uzávěrky</span>
<svg width="22" height="18" style="left:800px;top:19px" viewBox="0 0 22 18" fill="none" stroke="#555" stroke-width="1.7" stroke-linejoin="round"><path d="M1 4.6v11.8h19.5V4.2h-8.3L9.2 1H1"/></svg>
<span class="t nv" style="left:838.30px;top:19.90px;font-size:15px;color:#222;letter-spacing:-0.323px;">Svátky</span>
<svg width="22" height="18" style="left:928.5px;top:19px" viewBox="0 0 22 18" fill="none" stroke="#555" stroke-width="1.7" stroke-linejoin="round"><path d="M1 4.6v11.8h19.5V4.2h-8.3L9.2 1H1"/></svg>
<span class="t nv" style="left:966.70px;top:19.90px;font-size:15px;color:#222;letter-spacing:-0.118px;">Nastavení</span>
</div>
<div class="a" id="dark"></div>
<div class="a" id="teal"><svg width="32" height="28" style="left:22px;top:24px" viewBox="0 0 32 28" fill="none" stroke="#067568" stroke-width="1.6" stroke-linecap="round" stroke-linejoin="round"><path d="M1.5 3.5l2.2 2.2L8 1.6M1.5 13l2.2 2.2L8 11.1M13 3.5h16.8M13 13h16.8M13 23h16.8"/><circle cx="4.8" cy="23" r="2.2"/></svg></div>
<div class="a" id="hdr">
<svg width="32" height="33" style="left:22px;top:20px" viewBox="0 0 32 33"><path d="M11 .4h10v9.9H11zM0 12h32v9.5H21V33H11V21.5H0z" fill="#00cfb4"/><path d="M11 10.3h10V12H11z" fill="#0f8d85"/></svg>
<div class="a" style="left:75px;top:13px;width:1px;height:47px;background:#1e2e3b"></div>
<span class="t sb" style="left:106.00px;top:14.07px;font-size:20px;color:#000;font-weight:bold;letter-spacing:-0.632px;">Salesbook</span>
<span class="t un" style="left:1313.75px;top:29.60px;font-size:13px;color:#fff;letter-spacing:0.149px;-webkit-text-stroke:.3px #fff;">PharmDr. Ondřej Straka</span>
<div class="a" style="left:1519px;top:19px;width:1px;height:36px;background:#1fae9b;opacity:.8"></div>
<div class="a" style="left:1587px;top:19px;width:1px;height:36px;background:#1fae9b;opacity:.8"></div>
<div class="a" style="left:1650px;top:19px;width:1px;height:36px;background:#1fae9b;opacity:.8"></div>
<div class="a" style="left:1713px;top:19px;width:1px;height:36px;background:#1fae9b;opacity:.8"></div>
<div class="a" style="left:1775px;top:19px;width:1px;height:36px;background:#1fae9b;opacity:.8"></div>
<div class="a" style="left:1838px;top:19px;width:1px;height:36px;background:#1fae9b;opacity:.8"></div>
<svg width="23" height="23" style="left:1477.5px;top:25px" viewBox="0 0 23 23" fill="none" stroke="#253746" stroke-opacity=".8" stroke-width="1.5" stroke-linecap="round" stroke-linejoin="round"><circle cx="15.5" cy="7.5" r="6.3"/><circle cx="17.3" cy="5.8" r="1.4"/><path d="M10.6 11.5 1.2 19.5v2.3h3.3v-2.2h2.3v-2.2h2.2l2.6-2.6"/></svg>
<svg width="25" height="20" style="left:1539px;top:26.5px" viewBox="0 0 25 20" fill="none" stroke="#253746" stroke-opacity=".8" stroke-width="1.5" stroke-linejoin="round"><path d="M.8 5.2v14h23.4V4.7h-9.8L10.2.8H.8"/></svg>
<span class="t nn" style="left:1548.30px;top:34.00px;font-size:8.5px;color:#7c3e34;font-weight:bold;">N</span>
<svg width="25" height="20" style="left:1606.5px;top:26.5px" viewBox="0 0 25 20" fill="none" stroke="#253746" stroke-opacity=".8" stroke-width="1.5" stroke-linejoin="round"><path d="M.8 5.2v14h23.4V4.7h-9.8L10.2.8H.8"/></svg>
<svg width="21" height="22" style="left:1672px;top:26px" viewBox="0 0 21 22" fill="none" stroke="#253746" stroke-opacity=".8" stroke-width="1.5"><path d="M.8 6.3v14.5h19.4V1.4"/><path d="M0 1.4h21" stroke-width="2.2"/></svg>
<svg width="23" height="21" style="left:1733px;top:27px" viewBox="0 0 23 21" fill="none" stroke="#0c2424" stroke-width="1.7" stroke-linecap="round" stroke-linejoin="round"><circle cx="9" cy="7.3" r="4.4"/><path d="M5.6 11.4C3 12.6 1.2 15 .9 19.6h16.2M12.6 11.4c2.4 1.1 4.2 3.6 4.5 8.2"/><path d="M11.6 1.8a4 4 0 1 1 3.4 6.6M16.3 9.4c2.6 1 4.7 3.2 5.4 6.8h-3.5"/></svg>
<svg width="24" height="24" style="left:1796px;top:24.8px" viewBox="0 0 24 24" fill="none" stroke="#253746" stroke-opacity=".8" stroke-width="1.5" stroke-linejoin="round" stroke-linecap="round"><path d="M12.0 0.2 12.8 0.4 13.5 0.9 14.1 1.7 14.6 2.4 15.0 3.0 15.6 3.4 16.2 3.5 17.0 3.4 17.9 3.2 18.8 3.1 19.7 3.3 20.3 3.7 20.7 4.3 20.9 5.2 20.8 6.1 20.6 7.0 20.5 7.8 20.6 8.4 21.0 9.0 21.6 9.4 22.3 9.9 23.1 10.5 23.6 11.2 23.8 12.0 23.6 12.8 23.1 13.5 22.3 14.1 21.6 14.6 21.0 15.0 20.6 15.6 20.5 16.2 20.6 17.0 20.8 17.9 20.9 18.8 20.7 19.7 20.3 20.3 19.7 20.7 18.8 20.9 17.9 20.8 17.0 20.6 16.2 20.5 15.6 20.6 15.0 21.0 14.6 21.6 14.1 22.3 13.5 23.1 12.8 23.6 12.0 23.8 11.2 23.6 10.5 23.1 9.9 22.3 9.4 21.6 9.0 21.0 8.4 20.6 7.8 20.5 7.0 20.6 6.1 20.8 5.2 20.9 4.3 20.7 3.7 20.3 3.3 19.7 3.1 18.8 3.2 17.9 3.4 17.0 3.5 16.2 3.4 15.6 3.0 15.0 2.4 14.6 1.7 14.1 0.9 13.5 0.4 12.8 0.2 12.0 0.4 11.2 0.9 10.5 1.7 9.9 2.4 9.4 3.0 9.0 3.4 8.4 3.5 7.8 3.4 7.0 3.2 6.1 3.1 5.2 3.3 4.3 3.7 3.7 4.3 3.3 5.2 3.1 6.1 3.2 7.0 3.4 7.8 3.5 8.4 3.4 9.0 3.0 9.4 2.4 9.9 1.7 10.5 0.9 11.2 0.4z"/><path d="M15.2 15.6A4.7 4.7 0 1 1 16.4 10.6"/></svg>
<svg width="21" height="20" style="left:1859.5px;top:26.8px" viewBox="0 0 21 20" fill="none" stroke="#253746" stroke-opacity=".8" stroke-width="1.6"><path d="M.6.4 20.4 19.6M20.4.4.6 19.6"/></svg>
</div>
<svg width="1920" height="1080" style="left:0;top:0" viewBox="0 0 1920 1080"><line x1="345" y1="120" x2="537.5" y2="255.5" stroke="#000" stroke-width="2.2"/><rect x="537.2" y="255.6" width="373.8" height="122.6" fill="rgba(255,192,0,.8)" stroke="#000" stroke-width="2.5"/></svg>
<span class="t ov" style="left:608.00px;top:301.76px;font-size:31px;color:#000;letter-spacing:0.184px;">Sekce plánování</span>
</body></html>
